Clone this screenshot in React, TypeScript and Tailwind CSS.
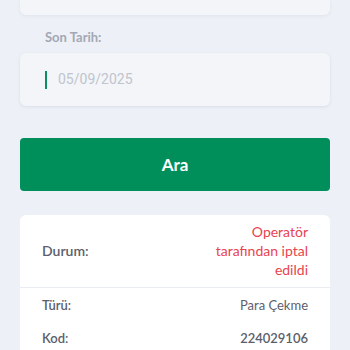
export default function App() {
  return (
    <div className="w-[350px] h-[350px] overflow-hidden bg-[#edf0f6] px-5 flex flex-col" style={{ fontFamily: 'Lato, "Noto Sans", sans-serif' }}>
      <div className="h-[15px] shrink-0 bg-[#f3f5f9] rounded-b-md shadow-[0_1px_3px_rgba(180,190,210,0.25)]" />
      <div className="mt-[14px] pl-[25px] text-[13px] font-bold text-[#a3a8b4] leading-[16px]">Son Tarih:</div>
      <div className="mt-[8px] h-[53px] shrink-0 bg-[#f3f5f9] rounded-md shadow-[0_1px_3px_rgba(180,190,210,0.35)] flex items-center pl-[25px]">
        <div className="w-[2px] h-[18px] bg-[#0d8f5f]" />
        <span className="ml-[11px] text-[14px] text-[#c0c4cd]" style={{ fontFamily: 'Roboto, sans-serif' }}>05/09/2025</span>
      </div>
      <button className="mt-[32px] h-[53px] shrink-0 bg-[#008f5a] rounded-[4px] text-white text-[17px] font-bold flex items-center justify-center">Ara</button>
      <div className="mt-[24px] bg-white rounded-t-md flex flex-col">
        <div className="px-[22px] pt-[7px] pb-[8px] flex items-center justify-between border-b border-[#e9ecf1]">
          <span className="text-[14px] font-semibold text-[#5b606c]">Durum:</span>
          <span className="text-right text-[14px] leading-[19px] text-[#e8434f] w-[100px]">Operatör tarafından iptal edildi</span>
        </div>
        <div className="px-[22px] pt-[5px] flex items-center justify-between h-[31px]">
          <span className="text-[13px] font-semibold text-[#5b606c]">Türü:</span>
          <span className="text-[13px] text-[#5b606c]">Para Çekme</span>
        </div>
        <div className="px-[22px] flex items-center justify-between h-[32px] pt-[8px]">
          <span className="text-[13px] font-semibold text-[#5b606c]">Kod:</span>
          <span className="text-[13px] font-semibold text-[#5b606c]">224029106</span>
        </div>
      </div>
    </div>
  );
}
